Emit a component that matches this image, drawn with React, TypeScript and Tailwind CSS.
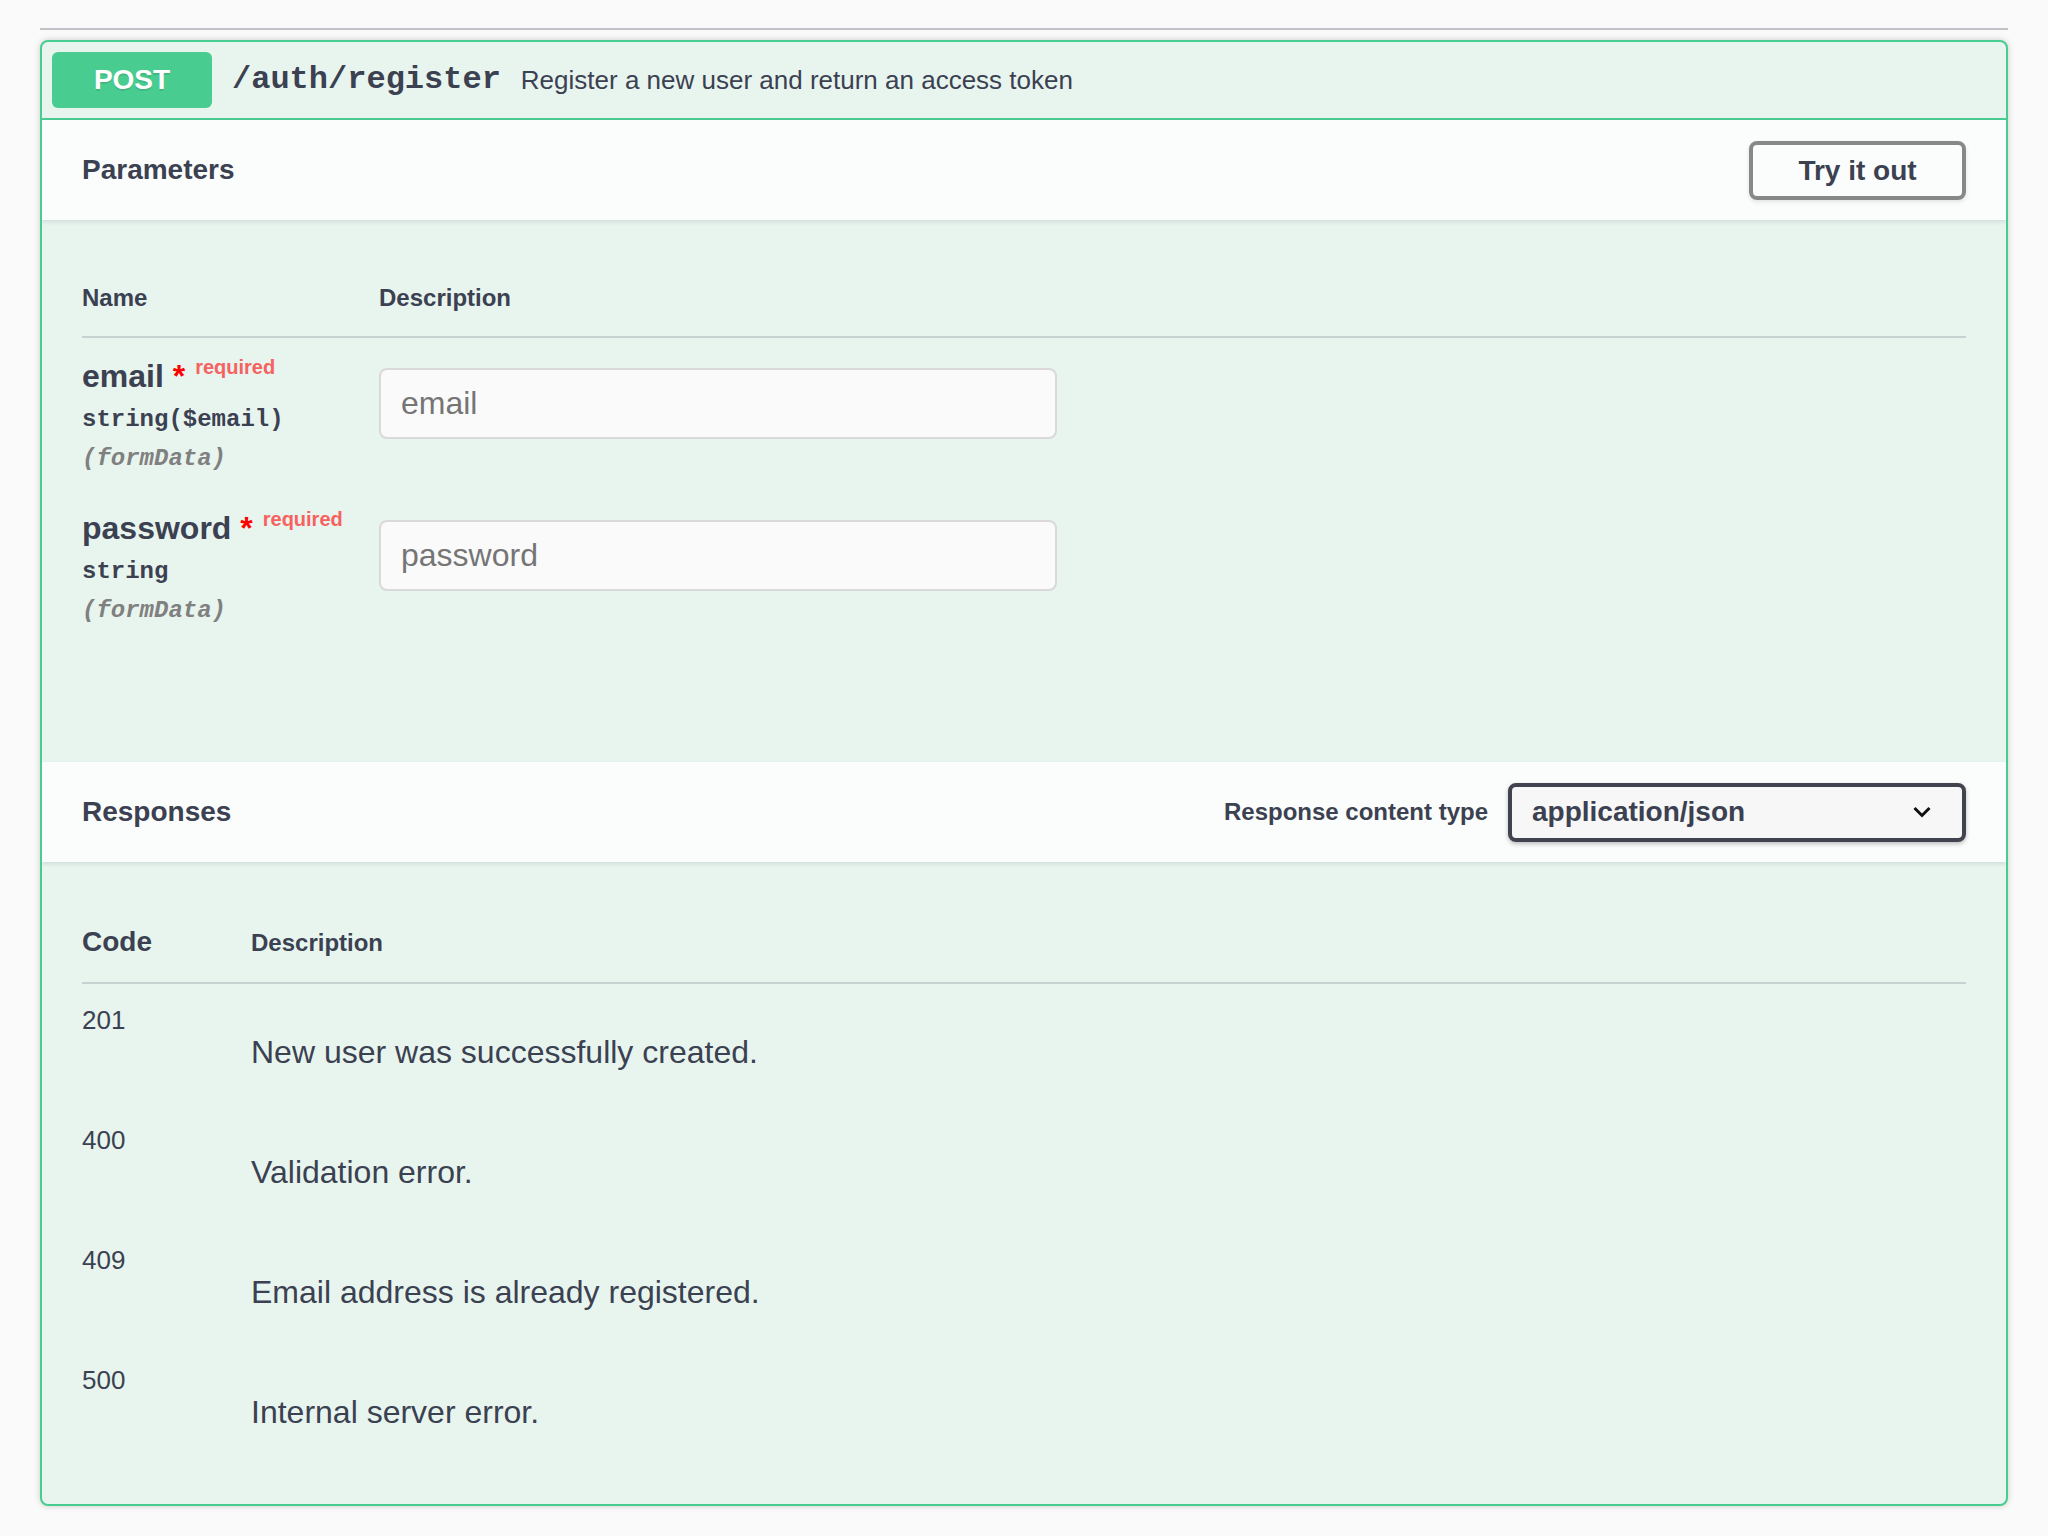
import React from "react";

const params = [
  { name: "email", type: "string($email)", placeholder: "email" },
  { name: "password", type: "string", placeholder: "password" },
];

const responses = [
  { code: "201", desc: "New user was successfully created." },
  { code: "400", desc: "Validation error." },
  { code: "409", desc: "Email address is already registered." },
  { code: "500", desc: "Internal server error." },
];

export default function App() {
  return (
    <div className="min-h-screen bg-[#fafafa] px-[40px] pt-[28px] pb-[30px] font-['Liberation_Sans',Arial,sans-serif] text-[#3b4151]">
      <div className="h-[2px] bg-[#c1c2c7]" />
      <div className="mt-[10px] overflow-hidden rounded-[8px] border-2 border-[#49cc90] bg-[#e8f5ef] shadow-[0_0_6px_rgba(0,0,0,0.19)]">
        {/* Summary */}
        <div className="flex items-center border-b-2 border-[#49cc90] p-[10px]">
          <span className="flex h-[56px] w-[160px] items-center justify-center rounded-[6px] bg-[#49cc90] text-[28px] font-bold text-white [text-shadow:0_2px_0_rgba(0,0,0,0.1)]">
            POST
          </span>
          <span className="px-[20px] font-['Liberation_Mono','Courier_New',monospace] text-[32px] font-bold">
            /auth/register
          </span>
          <span className="text-[26px]">Register a new user and return an access token</span>
        </div>

        {/* Parameters header */}
        <div className="relative z-[1] flex h-[100px] items-center bg-[#fafdfc] px-[40px] shadow-[0_2px_4px_rgba(0,0,0,0.1)]">
          <h4 className="flex-1 text-[28px] font-bold">Parameters</h4>
          <button className="h-[59px] w-[217px] rounded-[8px] border-4 border-[#888888] bg-transparent text-[28px] font-bold leading-[31px] text-[#3b4151] shadow-[0_2px_4px_rgba(0,0,0,0.1)]">
            Try it out
          </button>
        </div>

        {/* Parameters body */}
        <div className="px-[40px] pt-[40px] pb-[120px]">
          <div className="flex border-b-2 border-[#c5d2d0] py-[24px] text-[24px] font-bold leading-[28px]">
            <div className="w-[297px]">Name</div>
            <div>Description</div>
          </div>
          {params.map((p) => (
            <div key={p.name} className="flex pt-[19px] pb-[16px]">
              <div className="w-[297px]">
                <div className="text-[32px] font-bold leading-[39px]">
                  {p.name}
                  <span className="text-[#ff0000]">{"\u00a0*"}</span>
                  <span className="relative -top-[13px] px-[10px] text-[20px] font-bold leading-[20px] text-[#f66260]">
                    required
                  </span>
                </div>
                <div className="py-[10px] font-['Liberation_Mono','Courier_New',monospace] text-[24px] font-bold leading-[28px]">
                  {p.type}
                </div>
                <div className="font-['Liberation_Mono','Courier_New',monospace] text-[24px] font-bold italic leading-[30px] text-[#808080]">
                  (formData)
                </div>
              </div>
              <div>
                <input
                  type="text"
                  placeholder={p.placeholder}
                  className="mt-[11px] h-[71px] w-[678px] rounded-[8px] border-2 border-[#d9d9d9] bg-[#fafafa] px-[20px] text-[32px] text-[#3b4151] outline-none placeholder:text-[#757575]"
                />
              </div>
            </div>
          ))}
        </div>

        {/* Responses header */}
        <div className="relative z-[1] flex h-[100px] items-center bg-[#fafdfc] px-[40px] shadow-[0_2px_4px_rgba(0,0,0,0.1)]">
          <h4 className="flex-1 text-[28px] font-bold">Responses</h4>
          <label className="flex items-center text-[24px] font-bold">
            <span className="pr-[20px]">Response content type</span>
            <div className="relative flex h-[59px] w-[458px] items-center rounded-[8px] border-4 border-[#41444e] bg-[#f7f7f7] pl-[20px] text-[28px] font-bold shadow-[0_2px_4px_rgba(0,0,0,0.25)]">
              application/json
              <svg
                className="absolute right-[30px] top-1/2 -translate-y-1/2"
                width="20"
                height="20"
                viewBox="0 0 20 20"
                fill="none"
              >
                <path d="M2.5 6 L10 13.5 L17.5 6" stroke="#111111" strokeWidth="3" />
              </svg>
            </div>
          </label>
        </div>

        {/* Responses body */}
        <div className="px-[40px] pt-[40px] pb-[40px]">
          <div className="flex items-baseline border-b-2 border-[#c5d2d0] py-[24px] font-bold">
            <div className="w-[169px] text-[28px] leading-[32px]">Code</div>
            <div className="text-[24px] leading-[28px]">Description</div>
          </div>
          {responses.map((r) => (
            <div key={r.code} className="flex h-[120px]">
              <div className="w-[169px] pt-[21px] text-[26px] leading-[30px]">{r.code}</div>
              <div className="pt-[50px] text-[32px] leading-[37px]">{r.desc}</div>
            </div>
          ))}
        </div>
      </div>
    </div>
  );
}
